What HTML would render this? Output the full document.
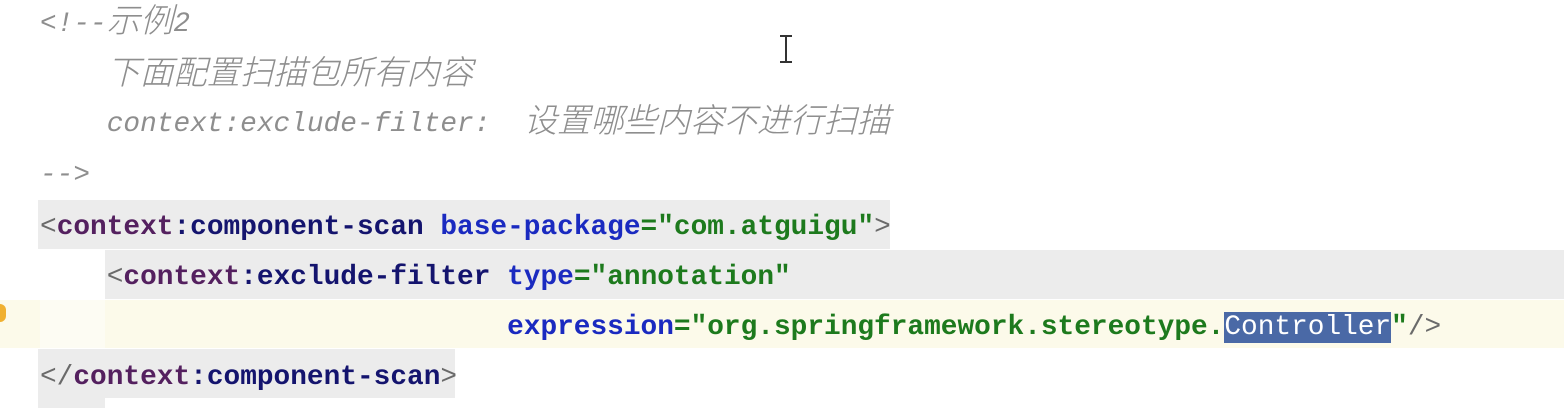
<!DOCTYPE html>
<html><head><meta charset="utf-8"><style>
body{margin:0;width:1564px;height:408px;background:#fff;position:relative;overflow:hidden;font-family:"Liberation Mono","Noto Sans CJK SC",monospace;font-size:27.8px}
.b{position:absolute}
.l{position:absolute;left:40px;white-space:pre;line-height:50px;height:50px}
.c{color:#8e8e8e;font-style:italic}
.z{font-size:33.3px;font-family:"Noto Sans CJK SC",sans-serif;font-weight:300;vertical-align:-1px;line-height:40px}
.t{color:#14146e;font-weight:bold}
.p{color:#54205f;font-weight:bold}
.a{color:#1a2ac0;font-weight:bold}
.v{color:#1d7a1d;font-weight:bold}
.g{color:#6a6a6a}
.s{background:#4a69a6;color:#fff}
</style></head><body>
<div class="b" style="left:38px;top:200px;width:852px;height:49px;background:#ececec"></div>
<div class="b" style="left:105px;top:250px;width:1459px;height:49px;background:#ececec"></div>
<div class="b" style="left:0;top:300px;width:1564px;height:48px;background:#fcfaea"></div>
<div class="b" style="left:40px;top:300px;width:65px;height:48px;background:#fdfcf3"></div>
<div class="b" style="left:38px;top:349px;width:417px;height:49px;background:#ececec"></div>
<div class="b" style="left:38px;top:398px;width:67px;height:10px;background:#ececec"></div>
<div class="b" style="left:-6px;top:304px;width:12px;height:18px;border-radius:6px;background:#f0b030"></div>
<div class="b" style="left:785px;top:36px;width:2px;height:26px;background:#333"></div>
<div class="b" style="left:780px;top:35px;width:12px;height:2px;background:#333"></div>
<div class="b" style="left:780px;top:61px;width:12px;height:2px;background:#333"></div>
<div class="l c" style="top:-2px">&lt;!--<span class="z">示例</span>2</div>
<div class="l c" style="top:50px">    <span class="z">下面配置扫描包所有内容</span></div>
<div class="l c" style="top:98px">    context:exclude-filter:  <span class="z">设置哪些内容不进行扫描</span></div>
<div class="l c" style="top:151px">--&gt;</div>
<div class="l" style="top:203px"><span class="g">&lt;</span><span class="p">context</span><span class="t">:component-scan </span><span class="a">base-package</span><span class="v">="com.atguigu"</span><span class="g">&gt;</span></div>
<div class="l" style="top:253px">    <span class="g">&lt;</span><span class="p">context</span><span class="t">:exclude-filter </span><span class="a">type</span><span class="v">="annotation"</span></div>
<div class="l" style="top:303px">                            <span class="a">expression</span><span class="v">="org.springframework.stereotype.</span><span class="s">Controller</span><span class="v">"</span><span class="g">/&gt;</span></div>
<div class="l" style="top:353px"><span class="g">&lt;/</span><span class="p">context</span><span class="t">:component-scan</span><span class="g">&gt;</span></div>
</body></html>
